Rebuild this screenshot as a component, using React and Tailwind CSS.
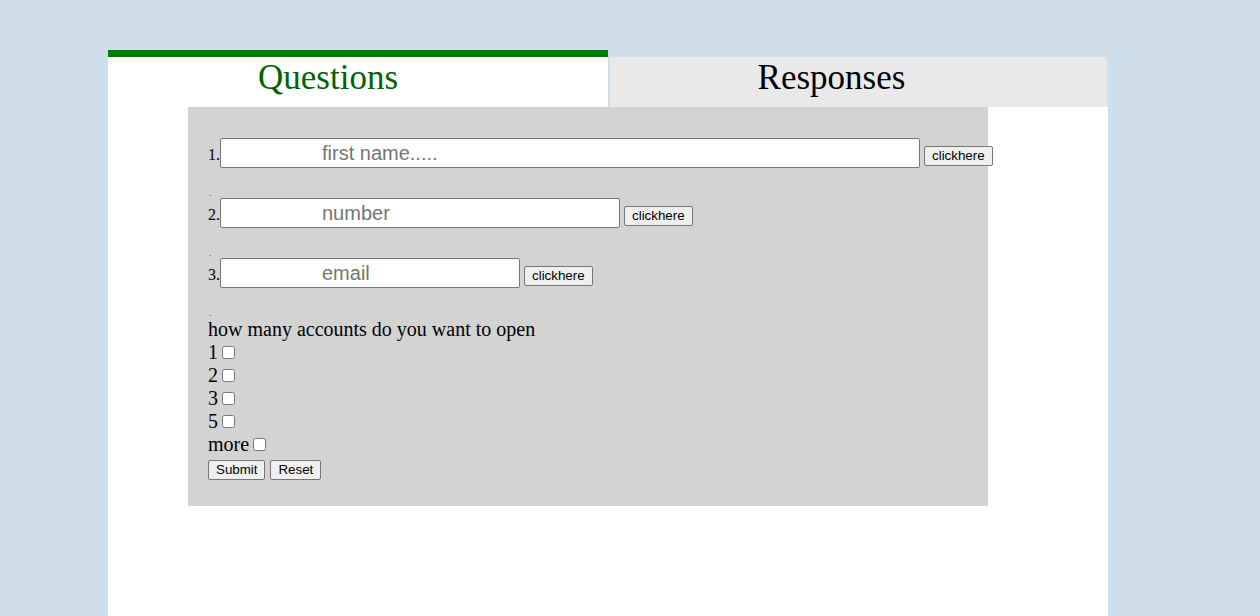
import React from 'react';

const serif = { fontFamily: '"Liberation Serif", "Times New Roman", serif' };

function Btn({ children }) {
  return (
    <button
      type="button"
      className="shrink-0 h-[20px] px-[7px] bg-[#efefef] border border-[#767676] rounded-[2px] text-[13.33px] leading-none text-black"
      style={{ fontFamily: '"Liberation Sans", Arial, sans-serif' }}
    >
      {children}
    </button>
  );
}

function Question({ n, placeholder, width }) {
  return (
    <div>
      <div className="flex items-baseline h-[30px]">
        <span className="shrink-0 text-[16px]">{n}.</span>
        <input
          type="text"
          placeholder={placeholder}
          className={`${width} shrink-0 h-[30px] bg-white border border-[#767676] rounded-[2px] pl-[101px] text-[20px] placeholder:text-[#757575] outline-none`}
          style={{ fontFamily: '"Liberation Sans", Arial, sans-serif' }}
        />
        <span className="shrink-0 ml-[4px]"><Btn>clickhere</Btn></span>
      </div>
      <div className="h-[30px] flex items-end">
        <span className="text-[8px] leading-[8px] pl-[1px]">.</span>
      </div>
    </div>
  );
}

function Check({ label }) {
  return (
    <div className="flex items-center h-[23px]">
      <span>{label}</span>
      <input type="checkbox" className="ml-[4px] w-[13px] h-[13px]" />
    </div>
  );
}

export default function App() {
  return (
    <div className="min-h-[616px] bg-[#cedfeb] pt-[50px] overflow-hidden" style={serif}>
      <div className="ml-[108px] w-[1000px]">
        {/* tabs */}
        <div className="flex gap-[2px]">
          <div className="w-[500px] h-[57px] bg-white border-t-[7px] border-[#008000] pt-[1px] pr-[60px] text-center text-[35px] leading-[40px] text-[#006400]">
            Questions
          </div>
          <div className="flex-1 mt-[7px] h-[50px] bg-[#e9e9e9] border-r border-[#dcdcdc] pt-[1px] pr-[54px] text-center text-[35px] leading-[40px] text-black">
            Responses
          </div>
        </div>

        {/* body */}
        <div className="bg-white h-[509px]">
          <div className="ml-[80px] w-[800px] bg-[#d3d3d3] pt-[31px] pb-[26px] px-[20px] text-black">
            <Question n={1} placeholder="first name....." width="w-[700px]" />
            <Question n={2} placeholder="number" width="w-[400px]" />
            <Question n={3} placeholder="email" width="w-[300px]" />

            <div className="text-[20px] leading-[23px]">
              <div>how many accounts do you want to open</div>
              <Check label="1" />
              <Check label="2" />
              <Check label="3" />
              <Check label="5" />
              <Check label="more" />
            </div>
            <div className="flex gap-[5px] mt-[4px]">
              <Btn>Submit</Btn>
              <Btn>Reset</Btn>
            </div>
          </div>
        </div>
      </div>
    </div>
  );
}
